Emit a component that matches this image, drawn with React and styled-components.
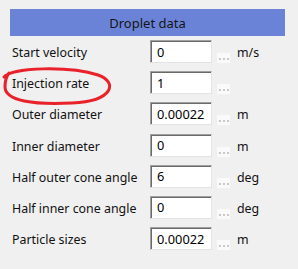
import styled, { createGlobalStyle } from "styled-components";

const GlobalStyle = createGlobalStyle`
  html, body {
    margin: 0;
    padding: 0;
    background: #f0f0f0;
  }
  body {
    font-family: "Noto Sans", "Liberation Sans", sans-serif;
  }
`;

const Panel = styled.div`
  position: relative;
  width: 298px;
  height: 269px;
  box-sizing: border-box;
  padding: 9px 13px 0 10px;
  background: #f0f0f0;
  color: #111;
`;

const Header = styled.div`
  height: 27px;
  background: #6b83d7;
  display: flex;
  align-items: center;
  justify-content: center;
  font-size: 13px;
  color: #141414;
`;

const Rows = styled.div`
  display: flex;
  flex-direction: column;
  gap: 8.2px;
  padding: 4px 0 0 2px;
`;

const Row = styled.div`
  display: grid;
  grid-template-columns: 138px 62px 13px auto;
  align-items: center;
  height: 23px;
  font-size: 12.4px;
`;

const Label = styled.span`
  padding-top: 2px;
  white-space: nowrap;
`;

const Field = styled.div`
  box-sizing: border-box;
  height: 23px;
  background: #fff;
  border-top: 1px solid #a0a0a0;
  border-left: 1px solid #a0a0a0;
  border-right: 1px solid #e3e3e3;
  border-bottom: 1px solid #e3e3e3;
  box-shadow: inset 1px 1px 0 #696969;
  padding: 0 0 0 6px;
  display: flex;
  align-items: center;
  font-size: 12.8px;
  color: #000;
`;

const Dots = styled.span`
  box-sizing: border-box;
  margin-left: 5px;
  width: 13px;
  height: 10px;
  align-self: end;
  background-color: #fafafa;
  background-image: radial-gradient(circle, #c8c8c8 0.9px, transparent 1.2px);
  background-size: 4px 4px;
  background-repeat: repeat-x;
  background-position: 1px 4px;
`;

const Unit = styled.span`
  padding-left: 12px;
  padding-top: 2px;
`;

const Annotation = styled.svg`
  position: absolute;
  left: 0;
  top: 60px;
  pointer-events: none;
`;

const rows = [
  { label: "Start velocity", value: "0", unit: "m/s" },
  { label: "Injection rate", value: "1", unit: "" },
  { label: "Outer diameter", value: "0.00022", unit: "m" },
  { label: "Inner diameter", value: "0", unit: "m" },
  { label: "Half outer cone angle", value: "6", unit: "deg" },
  { label: "Half inner cone angle", value: "0", unit: "deg" },
  { label: "Particle sizes", value: "0.00022", unit: "m" },
];

export default function App() {
  return (
    <>
      <GlobalStyle />
      <Panel>
        <Header>Droplet data</Header>
        <Rows>
          {rows.map((r) => (
            <Row key={r.label}>
              <Label>{r.label}</Label>
              <Field>{r.value}</Field>
              <Dots />
              <Unit>{r.unit}</Unit>
            </Row>
          ))}
        </Rows>
        <Annotation width="120" height="48" viewBox="0 0 120 48">
          <path
            d="M4 17 C 12 7, 70 6, 98 15 C 118 22, 114 41, 72 43 C 34 45, 5 41, 5 27 C 5 21, 6 17, 9 13"
            fill="none"
            stroke="#e8212b"
            strokeWidth="3"
            strokeLinecap="round"
          />
        </Annotation>
      </Panel>
    </>
  );
}
